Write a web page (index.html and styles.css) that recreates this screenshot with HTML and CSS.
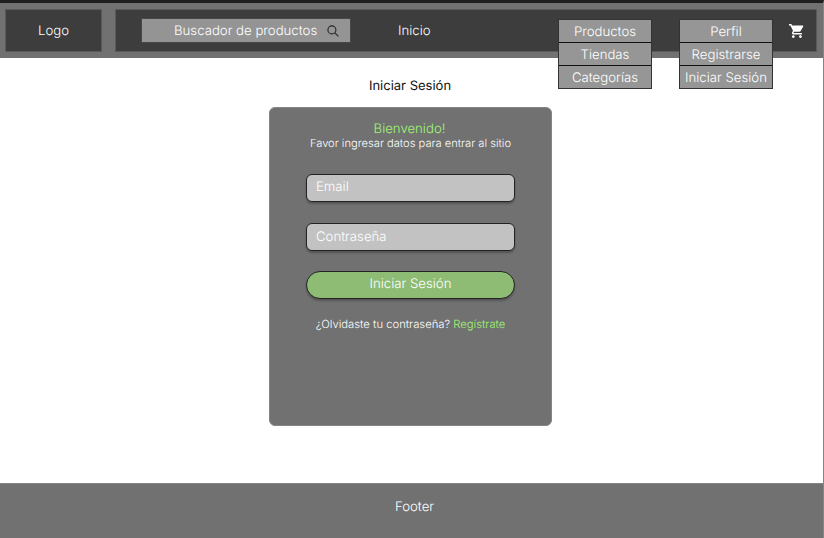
FILE: index.html
```html
<!DOCTYPE html>
<html lang="es">
<head>
<meta charset="utf-8">
<title>Iniciar Sesión</title>
<link rel="stylesheet" href="styles.css">
</head>
<body>
<div class="page">
  <header class="header">
    <a class="logo">Logo</a>
    <nav class="nav">
      <div class="search">
        <span>Buscador de productos</span>
        <svg class="search-icon" viewBox="0 0 12 12"><circle cx="4.9" cy="4.9" r="4" /><path d="M7.8 7.8L11.4 11.4" /></svg>
      </div>
      <a class="home">Inicio</a>
      <ul class="menu menu-products">
        <li>Productos</li>
        <li>Tiendas</li>
        <li>Categorías</li>
      </ul>
      <ul class="menu menu-profile">
        <li>Perfil</li>
        <li>Registrarse</li>
        <li>Iniciar Sesión</li>
      </ul>
      <svg class="cart" viewBox="1 2 21 20" preserveAspectRatio="none"><path d="M7 18c-1.1 0-1.99.9-1.99 2S5.9 22 7 22s2-.9 2-2-.9-2-2-2zM1 2v2h2l3.6 7.59-1.35 2.45c-.16.28-.25.61-.25.96 0 1.1.9 2 2 2h12v-2H7.42c-.14 0-.25-.11-.25-.25l.03-.12.9-1.63h7.45c.75 0 1.41-.41 1.75-1.03l3.58-6.49c.08-.14.12-.31.12-.48 0-.55-.45-1-1-1H5.21l-.94-2H1zm16 16c-1.1 0-1.99.9-1.99 2s.89 2 1.99 2 2-.9 2-2-.9-2-2-2z" /></svg>
    </nav>
  </header>
  <main class="main">
    <h1 class="title">Iniciar Sesión</h1>
    <form class="card">
      <h2 class="welcome">Bienvenido!</h2>
      <p class="hint">Favor ingresar datos para entrar al sitio</p>
      <div class="field">Email</div>
      <div class="field">Contraseña</div>
      <div class="submit">Iniciar Sesión</div>
      <p class="signup">¿Olvidaste tu contraseña? <a>Regístrate</a></p>
    </form>
  </main>
  <footer class="footer">Footer</footer>
</div>
</body>
</html>
```
FILE: styles.css
```css
* { box-sizing: border-box; }
body {
  margin: 0;
  font-family: Inter, sans-serif;
  font-size: 13.2px;
  font-weight: 300;
  line-height: 16px;
  text-rendering: geometricPrecision;
  color: #fff;
  background: #fff;
}
h1, h2, p, ul { margin: 0; padding: 0; font-weight: inherit; }
.page {
  height: 538px;
  display: flex;
  flex-direction: column;
  border-top: 3px solid #1f1f1f;
  border-right: 1px solid #858585;
}
.header {
  height: 55px;
  flex: none;
  display: flex;
  align-items: flex-start;
  gap: 13px;
  padding: 6px 6px 0 5px;
  background: #717171;
}
.logo, .nav {
  height: 43px;
  background: #3d3d3d;
  border: 1px solid #595959;
}
.logo { width: 97px; text-align: center; padding-top: 13px; }
.nav { flex: 1; display: flex; align-items: flex-start; padding-left: 25px; }
.search {
  width: 210px;
  height: 25px;
  margin-top: 8px;
  padding: 4px 11px 0 32px;
  display: flex;
  justify-content: space-between;
  white-space: nowrap;
  background: #949494;
  border: 1px solid #484848;
}
.search-icon {
  width: 12px;
  height: 12px;
  margin-top: 2px;
  flex: none;
  fill: none;
  stroke: #242424;
  stroke-width: 1.1;
}
.home { width: 33px; margin: 13px 0 0 47px; }
.menu {
  width: 94px;
  margin-top: 9px;
  list-style: none;
  text-align: center;
  white-space: nowrap;
  border: 1px solid #333;
  background: #969696;
}
.menu-products { margin-left: 127px; }
.menu-profile { margin-left: 27px; }
.menu li { height: 22px; padding-top: 4px; }
.menu li + li { height: 23px; border-top: 1px solid #111; }
.cart { width: 15px; height: 14px; margin: 14px 0 0 16px; fill: #fff; }
.main { flex: 1; display: flex; flex-direction: column; align-items: center; padding: 20px 3px 0 0; }
.title { font-size: 13px; font-weight: 400; line-height: 16px; color: #111; }
.card {
  width: 283px;
  height: 319px;
  margin-top: 13px;
  padding: 14px 35px 0 36px;
  display: flex;
  flex-direction: column;
  align-items: center;
  background: #717171;
  border: 1px solid #858585;
  border-radius: 6px;
}
.welcome { font-size: 13.2px; line-height: 14px; margin-right: 2px; color: #9ff573; }
.hint, .signup { font-size: 11.15px; line-height: 14px; white-space: nowrap; }
.field, .submit {
  width: 209px;
  height: 28px;
  flex: none;
  border: 1px solid #222;
  box-shadow: 0 2px 2px rgba(0, 0, 0, .25);
}
.field { margin-top: 24px; padding: 4px 9px; background: #c2c2c2; border-radius: 6px; }
.field + .field { margin-top: 21px; padding-top: 5px; }
.submit { margin-top: 20px; padding-top: 4px; text-align: center; background: #8ebc74; border-radius: 14px; }
.signup { font-size: 11.25px; margin-top: 18px; }
.signup a { color: #9ff573; }
.footer {
  height: 55px;
  flex: none;
  padding: 15px 0 0 6px;
  text-align: center;
  background: #717171;
  border-top: 1px solid #858585;
}
```
